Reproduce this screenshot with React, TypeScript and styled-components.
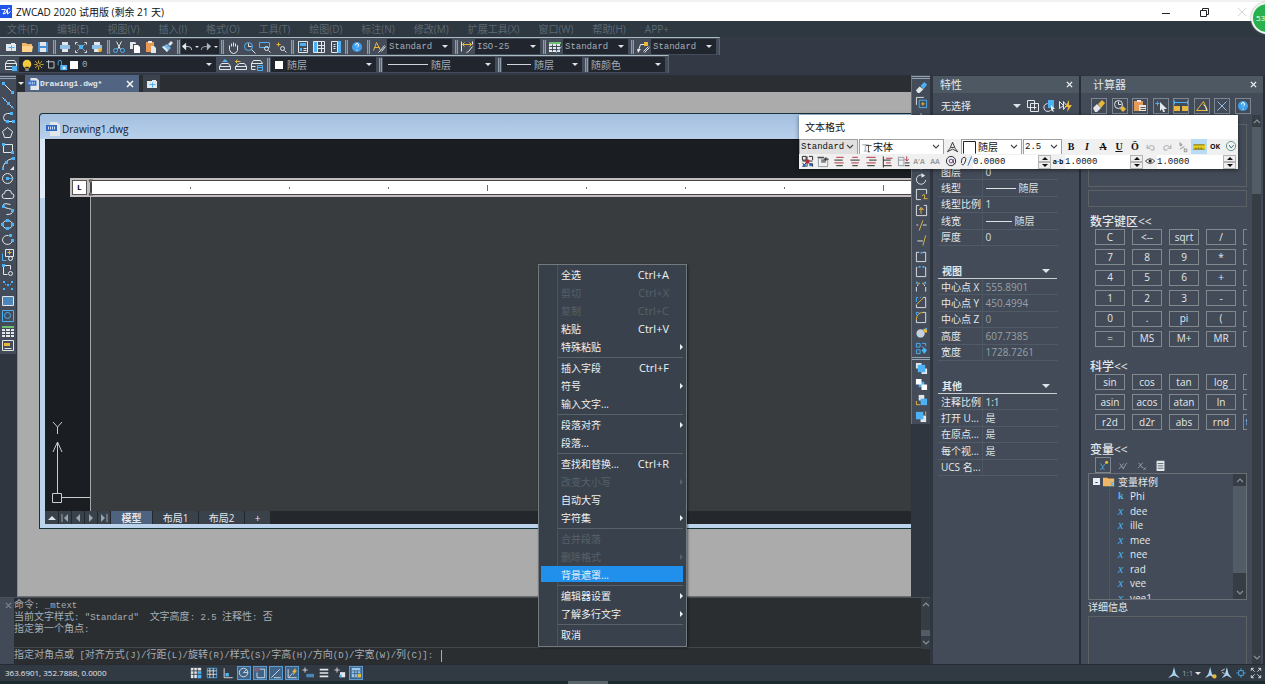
import React from "react";
import styled, { createGlobalStyle, css } from "styled-components";

const ui = `"Open Sans", "Noto Sans CJK SC", sans-serif`;
const mono = `"Liberation Mono", "Noto Sans CJK SC", monospace`;

const Global = createGlobalStyle`
  * { box-sizing: border-box; }
  body { margin: 0; overflow: hidden; background: #2f3640; font: 10px/14px ${ui}; color: #e4e8ec; }
  button, select, input { font: inherit; color: inherit; margin: 0; padding: 0; border: 0; background: none; border-radius: 0; }
  h1, h2, h3, ul, p { margin: 0; padding: 0; font-size: inherit; font-weight: 400; list-style: none; }
  a { color: inherit; text-decoration: none; }
`;

/* ---------- icons ---------- */

type Shape = [kind: "s" | "f", color: string, d: string];

const W = "#e3e7ea";
const B = "#4cb2f5";
const Y = "#eab83c";
const G = "#8d97a1";
const K = "#222222";
const R = "#b02a3a";
const P = "#2d68c4";

const circ = (x: number, y: number, r: number) =>
  `M${x - r} ${y}a${r} ${r} 0 1 0 ${2 * r} 0a${r} ${r} 0 1 0 ${-2 * r} 0z`;
const sq = (x: number, y: number, s = 2) => `M${x} ${y}h${s}v${s}h${-s}z`;
const box = (x: number, y: number, w: number, h: number) => `M${x} ${y}h${w}v${h}h${-w}z`;

const icons: Record<string, Shape[]> = {
  newFile: [["f", W, box(2, 4, 10, 7) + box(7, 3, 4, 2)], ["s", B, "M7 5v5M4 7h6"]],
  folder: [["f", "#f0b866", "M2 3h4l1 1h5v8H2z"], ["f", "#ffd28c", "M2 6h11l-1 6H2z"]],
  save: [["f", "#4d8fd0", "M2 2h9l1 1v9H2z"], ["f", W, box(4, 2, 6, 4) + box(4, 8, 6, 4)]],
  print: [["f", W, box(4, 2, 6, 3) + box(4, 9, 6, 3)], ["f", "#8fc1ea", box(2, 5, 10, 4)]],
  preview: [["f", B, box(5, 5, 4, 4)], ["s", W, "M1 4V2h2M10 2h2v2M12 10v2h-2M3 12H1v-2M3 4l1 1M10 4l-1 1M3 10l1-1M10 10l-1-1"]],
  publish: [["f", W, box(4, 2, 6, 3) + box(4, 9, 5, 3)], ["f", "#8fc1ea", box(2, 5, 10, 4)], ["f", Y, circ(10, 10, 2)]],
  cut: [["s", W, "M4 1l4 8M9 1L5 9"], ["s", B, circ(3, 10, 2) + circ(10, 10, 2)]],
  copy: [["f", W, "M2 2h5l1 1v6H2z"], ["f", "#434c58", box(5, 4, 8, 9)], ["f", "#ffffff", "M6 5h4l2 2v6H6z"]],
  paste: [["f", "#e79a55", box(2, 2, 8, 10)], ["f", W, box(4, 1, 4, 2) + "M7 6h3l2 2v5H7z"]],
  brush: [["f", "#74b8ee", "M7 4l4 4-4 4-5-5z"], ["f", W, "M8 4l3-3 2 2-3 3zM2 7l2-1 4 4-1 2z"]],
  undo: [["s", W, "M4 6h4q4 0 4 4"], ["f", W, "M6 2v9L1 6z"]],
  redo: [["s", "#aeb6be", "M9 6H5q-4 0-4 4"], ["f", "#aeb6be", "M8 2v9l5-5z"]],
  hand: [["s", W, "M3 7V5M5 6V3M7 6V2M9 6V3M11 7V5v5q-1 3-4 3t-4-4V6"]],
  zoomClock: [["s", B, circ(6, 6, 4)], ["s", W, "M6 3v3h3M9 9l4 4"]],
  zoomWin: [["s", B, box(1, 2, 10, 5)], ["s", W, circ(8, 8, 2) + "M10 10l2 2"]],
  zoomPrev: [["s", Y, "M2 4h4M4 2v4"], ["s", W, circ(8, 8, 2) + "M10 10l2 2"]],
  sheet: [["s", W, box(2, 1, 9, 11)], ["f", B, box(4, 3, 6, 3) + box(4, 8, 2, 3)], ["s", W, "M7 8h3M7 10h3"]],
  center: [["s", W, box(1, 1, 11, 11)], ["f", B, box(2, 2, 3, 10)], ["s", W, "M5 1v11M9 1v11M5 5h7M5 8h7"]],
  palette: [["s", W, "M3 1h6v11H3z"], ["f", B, box(10, 1, 3, 12)], ["s", W, "M5 4h2M5 6h2M5 8h2"]],
  help: [["f", "#3fa0ee", circ(7, 7, 5)], ["s", "#ffffff", "M5 5q0-2 1.500-2t1.500 1.500T6.500 7M6.500 9v1"]],
  textStyle: [["s", Y, "M1 10L4 2l4 8M2 7h5"], ["s", W, "M12 5l-4 5-2 2M13 6l-4 5"]],
  dimStyle: [["s", Y, "M2 4h9M4 2L2 4l2 2M9 2l2 2-2 2"], ["s", W, "M1 1v10M12 1v3M12 6l-4 5-2 1"]],
  tableStyle: [["f", "#6fbf73", box(1, 2, 12, 2)], ["f", W, box(1, 4, 11, 8)], ["s", "#434c58", "M1 6h11M1 9h11M4 4v7M8 4v7"], ["s", "#9cc8ea", "M13 6l-5 6"]],
  leader: [["s", W, "M2 10l2-6h4M13 7l-5 5M12 6l-5 5"], ["f", Y, box(8, 2, 4, 4)], ["f", W, "M1 9h4l-3 4z"]],
  layers: [["s", W, "M3 2h7l2 3H1zM1 8h11M1 11h11M1 5v6M12 5v6"], ["f", B, box(8, 8, 5, 5)]],
  layerUp: [["s", W, "M3 5h7l2 3H1zM1 8v3h11V8"], ["f", B, "M7 1l3 3H4z"]],
  layerBack: [["s", W, "M5 5h5l2 3H1zM1 8v3h11V8"], ["s", Y, "M1 3h5M3 1L1 3l2 2"]],
  layerTool: [["s", W, "M3 2h7l2 3H1zM1 8h4M1 11h4M1 5v6"], ["s", B, box(7, 7, 5, 5) + "M7 9h5"]],
  bulb: [["f", "#f3c93f", circ(7, 6, 5) + box(5, 9, 4, 3)], ["f", G, box(5, 12, 4, 2)]],
  sun: [["s", Y, circ(6, 6, 2) + "M6 1v3M6 9v3M1 6h3M9 6h3M2 2l2 2M8 8l2 2M10 2L8 4M4 8l-2 2"]],
  vp: [["s", W, box(4, 3, 7, 8) + "M1 3h3M4 1v2"]],
  lock: [["s", B, "M2 7V3q0-2 2-2t2 2v4"], ["f", B, box(5, 7, 8, 6)], ["f", W, sq(8, 9, 3)]],
  dwg: [["f", W, "M4 0h7l3 3v11H4z"], ["f", P, box(0, 3, 11, 6)], ["s", "#cfe0f5", "M2 4v3M4 4v3M6 4v3M8 4v3"]],
  // drawing tools
  line: [["s", W, "M2 2l9 9"], ["f", B, sq(1, 1, 3) + sq(10, 10, 3)]],
  ray: [["s", W, "M1 1l11 11"], ["f", B, sq(3, 3) + sq(6, 6, 3) + sq(10, 10)]],
  pline: [["s", W, "M9 2H6a4 4 0 0 0 0 8h5"], ["f", B, sq(9, 1, 3) + sq(5, 9, 3) + sq(11, 9, 3)]],
  polygon: [["s", W, "M6 1l5 4-2 6H3L1 5z"]],
  rect: [["s", W, box(2, 3, 9, 8)], ["f", B, sq(1, 2, 3) + sq(10, 10, 3)]],
  arc: [["s", W, "M1 12Q2 3 11 1"], ["f", B, sq(1, 11) + sq(4, 4, 3) + sq(11, 0, 3)], ["f", W, "M13 9v4H9z"]],
  circle: [["s", W, circ(6, 6, 5)], ["s", B, "M6 6h6"], ["f", B, sq(5, 5, 3)]],
  cloud: [["s", W, "M3 11a2.500 2.500 0 0 1 0-5 3.500 3.500 0 0 1 7 0 2.500 2.500 0 0 1 0 5z"]],
  spline: [["s", W, "M9 2Q1 0 2 3t5 3 4 3-6 3"], ["f", B, sq(1, 3, 3) + sq(10, 7, 3)]],
  ellipse: [["s", W, "M1 6a5 4 0 1 0 10 0a5 4 0 1 0-10 0z"], ["f", B, sq(0, 5, 3) + sq(5, 1, 3) + sq(10, 5, 3) + sq(5, 9, 3)]],
  earc: [["s", W, "M7 2a5 4.500 0 1 0 4 5"], ["f", B, sq(8, 1, 3) + sq(10, 6, 3)]],
  insert: [["s", W, box(4, 1, 8, 7) + circ(9, 10, 2)], ["s", B, "M1 5v7h4"], ["s", Y, "M6 4h4M8 2v4"]],
  block: [["s", W, "M9 6V2H2v9h4"], ["s", W, circ(9, 10, 2)], ["f", B, sq(1, 1, 3)]],
  points: [["f", B, sq(2, 3) + sq(10, 3) + sq(6, 6) + sq(2, 10) + sq(10, 10) + sq(9, 6, 1) + sq(4, 6, 1)]],
  hatch: [["f", "#4a86b8", box(2, 2, 10, 10)], ["s", W, box(1, 2, 11, 9)]],
  region: [["s", B, box(1, 1, 11, 11)], ["s", B, circ(6, 6, 3)]],
  table: [["f", "#6fbf73", box(1, 2, 12, 2)], ["f", W, box(1, 5, 3, 2) + box(5, 5, 4, 2) + box(10, 5, 3, 2) + box(1, 8, 3, 2) + box(5, 8, 4, 2) + box(10, 8, 3, 2) + box(1, 11, 3, 2) + box(5, 11, 4, 2) + box(10, 11, 3, 2)]],
  mtext: [["s", W, box(1, 1, 11, 10)], ["f", Y, box(3, 4, 6, 3)], ["s", W, "M3 9h7"]],
  // modify tools
  eraser: [["f", W, "M1 10l4-4 4 3-4 4H3z"], ["f", B, "M6 5l4-4 3 3-4 5z"]],
  copyObj: [["s", B, box(4, 4, 8, 8)], ["s", W, "M1 9V1h8"], ["s", Y, "M8 6v4M6 8h4"]],
  mirror: [["s", W, "M6 1v11M4 4v6H1zM8 4v6h3z"]],
  offset: [["s", W, "M3 12V6q0-3 4-3h5M7 12V8h5"]],
  array: [["f", B, sq(2, 2, 4) + sq(8, 2, 4) + sq(2, 8, 4) + sq(8, 8, 4)]],
  move: [["s", W, "M6 1v11M1 6h11"]],
  rotate: [["s", W, "M8 2A5 5 0 1 0 11 7"], ["f", W, "M7 0l4 3-4 2z"]],
  scale: [["s", W, "M12 6V1H1v11h5"], ["s", Y, "M7 8q3-3 3 0t-1 3h4"]],
  stretch: [["s", W, "M4 1H1v11h11V1H9"], ["s", Y, "M6 10V4M4 6l2-3 3 3M5 5h3"]],
  trim: [["s", Y, "M8 1L4 12"], ["s", W, "M8 6h4M1 6h2"]],
  extend: [["s", Y, "M11 1L8 12"], ["s", W, "M2 7h6"]],
  breakAt: [["s", W, "M4 2H1v10h10V2H8"], ["f", B, sq(6, 2)]],
  breakTwo: [["s", W, "M2 2H1v10h10V2h-1"], ["f", B, sq(4, 1) + sq(8, 1)]],
  join: [["s", W, "M1 12V7M11 12V7M2 6l1-2M10 6L9 4"], ["s", Y, "M3 3h2M7 3h2"], ["f", B, sq(1, 2) + sq(10, 2)]],
  chamfer: [["s", W, "M11 1v11H1V9M8 1h3"], ["s", Y, "M1 9l8-8"], ["s", B, "M1 6V1h2M5 1h1"]],
  fillet: [["s", W, "M11 1v11H1V9M8 1h3"], ["s", Y, "M1 9q0-8 8-8"], ["s", B, "M1 4V1h3"]],
  explode: [["f", "#c4d2e0", circ(6, 8, 4.500)], ["f", Y, sq(9, 3, 4)], ["f", B, sq(11, 2)]],
  blend: [["s", B, box(1, 1, 4, 4) + box(1, 8, 4, 4) + "M7 1h4v3M7 4l4 4"], ["f", B, "M10 6l3 3-3 4-3-4z"]],
  front: [["f", W, box(1, 1, 6, 6) + box(7, 7, 6, 6)], ["f", B, box(3, 3, 8, 8)]],
  back: [["f", B, box(4, 4, 6, 6)], ["f", "#ffffff", box(1, 1, 6, 6) + box(7, 7, 6, 6)]],
  above: [["f", W, box(4, 1, 6, 6)], ["f", B, box(6, 5, 7, 7)], ["s", Y, "M1 7v4h4"]],
  below: [["f", W, box(6, 6, 6, 7)], ["f", B, box(1, 2, 8, 8)], ["s", Y, "M11 5V1"]],
  // property tools
  pick: [["s", W, box(1, 1, 7, 7) + box(4, 4, 8, 8)], ["s", W, "M8 6v4M6 8h4"]],
  pickSel: [["s", W, "M5 4a4 4 0 1 0 3 7"], ["f", B, box(6, 1, 6, 8)], ["f", W, "M9 6l4 4-2 0 1 3-2-1-1-1z"]],
  quick: [["s", W, "M1 2l4 4-4 3zM5 2l3 4-3 4z"], ["f", Y, "M11 1L7 8h3l-1 5 5-7h-3z"]],
  eraserW: [["f", W, "M1 9l4-4 4 4-4 4H3z"], ["f", Y, "M6 5l4-4 3 3-4 5z"]],
  clock: [["s", W, circ(5, 5, 4) + "M5 2v3h3"], ["f", Y, "M7 10l3-3 3 3-3 3z"]],
  clip: [["f", "#e79a55", box(1, 2, 9, 10)], ["f", W, box(4, 1, 4, 2) + box(6, 6, 7, 6)], ["s", "#70553f", "M7 8h5M7 10h5"]],
  cursor: [["s", B, "M1 4h4M3 2v4"], ["f", W, "M6 3l7 7-3 0 1 3-2 0-1-3-2 2z"]],
  dist: [["s", B, "M0 3h13M0 1v4M13 1v4"], ["f", Y, box(0, 7, 6, 5) + box(8, 7, 6, 5)]],
  angle: [["s", Y, "M1 11h11M1 11L8 2M8 2l4 9"], ["s", W, "M8 5q3 2 3 6"]],
  cross: [["s", "#8fbfe8", "M2 2l9 9M11 2l-9 9"]],
  varNew: [["s", B, "M2 4q2 0 3 4t3 4M9 4q-1 0-3 4t-4 4"], ["f", Y, circ(11, 3, 2)]],
  varEdit: [["s", "#a5adb5", "M3 4l5 7M8 4l-6 7M12 3l-5 8"]],
  varDel: [["s", "#a5adb5", "M3 3l5 7M8 3l-6 7M9 9l3 3M12 9l-3 3"]],
  calc: [["f", W, box(2, 1, 10, 13)], ["s", "#434c58", "M3 4h7M3 7h7M3 10h7"]],
  varFolder: [["f", "#f0b866", "M0 2h5l1 1h7v9H0z"], ["s", B, "M8 6l4 6M12 6l-4 6"]],
  // status icons
  snap: [["f", W, box(1, 1, 12, 12)], ["f", B, box(9, 5, 4, 8)], ["s", "#2f3640", "M4 1v12M8 1v12M1 4h12M1 8h12"]],
  grid: [["s", B, box(1, 1, 11, 11)], ["s", W, "M4 1v11M8 1v11M1 4h11M1 8h11"]],
  ortho: [["s", W, "M2 1v11h10"], ["f", B, sq(4, 7, 4)]],
  polar: [["s", W, circ(6, 6, 5) + "M6 6h5M6 6l4-4"]],
  osnap: [["s", W, "M6 2h6v10H3V6"], ["s", "#d85450", box(1, 1, 3, 3)]],
  otrack: [["s", W, "M1 12L11 2M4 12h8"]],
  dyn: [["s", W, "M2 2v10h10M3 11l4-4"], ["f", Y, "M11 1L7 6h2l-1 4 5-6h-2z"]],
  dynIn: [["s", W, "M0 3h6M3 0v6"], ["f", "#4a86b8", "M5 8h9v4H5z"]],
  lwt: [["f", W, box(2, 2, 10, 2) + box(2, 6, 10, 2) + box(2, 10, 10, 2)]],
  cycle: [["s", W, "M0 3h6M3 0v6"], ["f", W, box(7, 6, 6, 6)], ["f", B, sq(6, 9, 3)]],
  qp: [["f", "#9cc8ea", box(2, 1, 10, 11)], ["s", "#2f5f8a", "M2 4h9M2 7h9M5 4v7M8 4v7"], ["f", Y, sq(9, 8, 4)]],
  anno: [["f", "#a9d4f2", "M7 0l2 8 5 5-7-3-7 3 5-5z"]],
  annoY: [["f", "#a9d4f2", "M6 0l2 8 4 5-6-3-6 3 4-5z"], ["f", Y, circ(11, 11, 2.500)]],
  annoR: [["f", "#a9d4f2", "M8 0l2 8 4 5-6-3-6 3 4-5z"], ["s", W, "M1 4l4-2M2 6l3 1"]],
  gear: [["s", B, circ(6.500, 6.500, 3)], ["s", B, "M6.500 1v3M6.500 9v3M1 6.500h3M9 6.500h3M3 3l1 1M9 9l1 1M10 3L9 4M4 9l-1 1"]],
  full: [["s", W, "M1 4V1h3M9 1h3v3M12 9v3H9M4 12H1V9M1 1l4 4M12 1L8 5M12 12L8 8M1 12l4-4"]],
  // text format icons
  tt: [["s", G, "M1 3h8M5 3v8M3 11h4"], ["s", K, "M6 4h7M9 4v8M8 12h3"]],
  annoA: [["s", K, "M6 1l3 7 3 4-6-3-6 3 3-4zM4 7h4"]],
  swatch: [["f", "#ffffff", box(1, 2, 12, 12)], ["s", K, "M0 13V1h12v12"]],
  undoG: [["s", "#9aa0a8", "M2 4v4h4M2 8q4-5 8-2v4H6"]],
  redoG: [["s", "#9aa0a8", "M11 4v4H7M11 8Q7 3 3 6v4h4"]],
  frac: [["s", "#8a8a8a", "M3 1v4h2V3H3M3 9l5-3M8 8v4h3V9H8"]],
  rulerY: [["f", "#e7cf1c", box(0, 4, 14, 6)], ["s", "#6d6420", "M0 4h13M0 9h13M3 9V7M6 9V7M9 9V7"]],
  expand: [["s", "#5f8f8c", circ(6, 6, 5)], ["s", "#1b6b66", "M4 5l2 3 3-3"]],
  cols: [["s", K, "M1 1h4v4H1zM8 1h4v4M1 8l4 4M5 8l-4 4M8 9h4v3M1 6h11M6 1v11"], ["f", R, sq(5, 5, 4)], ["f", P, sq(9, 9, 3) + sq(2, 10, 3)]],
  just: [["s", G, box(1, 3, 10, 9)], ["s", K, "M0 2h7M4 5h5M4 7h5M9 2v4M7 4h5"]],
  al: [["s", R, "M3 2h8M1 8h10"], ["s", K, "M1 5h9M3 11h7"]],
  ac: [["s", R, "M3 2h6M2 8h8"], ["s", K, "M1 5h10M3 11h6"]],
  ar: [["s", R, "M1 2h10M1 8h10"], ["s", K, "M4 5h8M2 11h8"]],
  num: [["s", R, "M5 3h7M5 8h5"], ["s", K, "M2 1v12M2 5h8M2 11h9"]],
  field: [["s", G, box(1, 2, 6, 9) + "M1 5h6"], ["s", R, "M10 1v5M8 4l2 2 2-2"], ["s", K, "M8 8h5M8 11h5"]],
  at: [["s", K, circ(6, 6, 5)], ["s", "#633a7a", circ(6, 6, 2) + "M8.500 4v4l2 1"]],
  obl: [["s", K, "M1 8q0-6 3-6t1 5-4 2"], ["s", P, "M8 11l4-10"]],
  eye: [["s", K, "M0 6q6-6 12 0-6 6-12 0z"], ["f", K, circ(6.500, 6.500, 2)]],
};

const Svg = styled.svg<{ $size: number }>`
  flex: none;
  display: block;
  width: ${(p) => p.$size}px;
  height: ${(p) => p.$size}px;
`;

// Strokes are shifted by half a unit so that whole coordinates fall on pixel centres.
const Icon = ({ name, size = 14 }: { name: string; size?: number }) => (
  <Svg $size={size} viewBox="0 0 14 14" aria-hidden="true">
    {icons[name].map(([kind, color, d], i) =>
      kind === "s" ? (
        <path key={i} d={d} fill="none" stroke={color} strokeWidth="1" transform="translate(0.5 0.5)" />
      ) : (
        <path key={i} d={d} fill={color} />
      )
    )}
  </Svg>
);

const Tri = styled.i<{ $dir?: "up" | "down" | "left" | "right"; $color?: string; $s?: number }>`
  flex: none;
  width: 0;
  height: 0;
  border: ${(p) => p.$s ?? 4}px solid transparent;
  pointer-events: none;
  ${(p) => {
    const c = p.$color ?? "#dfe3e7";
    switch (p.$dir) {
      case "up": return css`border-top: 0; border-bottom-color: ${c};`;
      case "left": return css`border-left: 0; border-right-color: ${c};`;
      case "right": return css`border-right: 0; border-left-color: ${c};`;
      default: return css`border-bottom: 0; border-top-color: ${c};`;
    }
  }}
`;

const Chevron = ({ up = false, color = "#8b939b", size = 8 }: { up?: boolean; color?: string; size?: number }) => (
  <Svg $size={size} viewBox="0 0 8 8" aria-hidden="true">
    <path d={up ? "M1 6l3-3 3 3" : "M1 2l3 3 3-3"} fill="none" stroke={color} strokeWidth="1.1" />
  </Svg>
);

/* ---------- shell ---------- */

const Shell = styled.div`
  position: relative;
  display: flex;
  flex-direction: column;
  height: 100vh;
  overflow: hidden;
`;

const TitleBar = styled.header`
  display: flex;
  align-items: center;
  gap: 4px;
  height: 21px;
  padding-right: 17px;
  border-top: 2px solid #f1f1f1;
  background: #fff;
  color: #111;
`;

const Logo = styled.svg`
  width: 12px;
  height: 13px;
`;

const WindowButtons = styled.div`
  display: flex;
  gap: 26px;
  margin-left: auto;
`;

const WindowButton = styled.button`
  display: grid;
  place-items: center;
  width: 12px;
  height: 12px;
`;

const Bubble = styled.div`
  position: absolute;
  top: 2px;
  right: -18px;
  width: 32px;
  height: 32px;
  padding-left: 3px;
  border: 2px solid #eef5ef;
  border-radius: 50%;
  background: #27b04c;
  color: #fff;
  font: 8px/28px ${ui};
  box-shadow: 0 0 2px #8a9a8d;
`;

const MenuBar = styled.nav`
  display: flex;
  align-items: center;
  gap: 19px;
  height: 16px;
  padding-left: 7px;
  background: #2d3841;
  color: #5d6873;
  white-space: nowrap;
`;

const Toolbars = styled.div`
  height: 38px;
  background: #343a45;
`;

const Toolbar = styled.div`
  display: flex;
  align-items: center;
  width: max-content;
  height: 18px;
  padding: 0 2px 0 3px;
  border-top: 1px solid #a9bcc4;
  border-right: 1px solid #59636e;
  background: #434c58;
`;

const ToolButton = styled.button`
  display: grid;
  place-items: center;
  flex: none;
  width: 16px;
  height: 16px;
`;

const Grip = styled.i`
  flex: none;
  width: 6px;
  height: 14px;
  border: solid #434c58;
  border-width: 0 1px 0 2px;
  background: linear-gradient(90deg, #8f9dab 1px, #5d6874 1px, #5d6874 2px, #8f9dab 2px);
`;

const ComboBox = styled.div<{ $w: number }>`
  display: flex;
  align-items: center;
  flex: none;
  width: ${(p) => p.$w}px;
  height: 15px;
  margin: 0 1px 0 0;
  padding: 0 4px 0 2px;
  background: #20252e;
  color: #a4adb6;
`;

const Select = styled.select<{ $mono?: boolean }>`
  flex: 1;
  min-width: 0;
  height: 14px;
  appearance: none;
  outline: 0;
  font: ${(p) => (p.$mono ? `9px/14px ${mono}` : `10px/14px ${ui}`)};
`;

const HistoryCombo = styled.div`
  display: flex;
  align-items: center;
  width: 38px;
  height: 15px;
  background: #20252e;
`;

const HistoryButton = styled.button<{ $w: number }>`
  display: grid;
  place-items: center;
  width: ${(p) => p.$w}px;
  height: 15px;
`;

const Stroke = styled.i<{ $w: number }>`
  flex: none;
  width: ${(p) => p.$w}px;
  height: 1px;
  margin: 0 3px 0 3px;
  background: #cfd5da;
`;

const Swatch = styled.i`
  flex: none;
  width: 8px;
  height: 8px;
  margin: 0 4px 0 2px;
  background: #fff;
`;

const Combo = ({ label, value, w, isMono, children }: {
  label: string; value: string; w: number; isMono?: boolean; children?: React.ReactNode;
}) => (
  <ComboBox $w={w}>
    {children}
    <Select aria-label={label} $mono={isMono}><option>{value}</option></Select>
    <Tri $s={3} />
  </ComboBox>
);

const Tools = ({ names }: { names: string[] }) => (
  <>{names.map((n) => <ToolButton key={n} aria-label={n}><Icon name={n} /></ToolButton>)}</>
);

/* ---------- document area ---------- */

const Main = styled.main`
  display: flex;
  flex: 1;
  min-height: 0;
`;

const Editor = styled.section`
  display: flex;
  flex-direction: column;
  flex: 1;
  min-width: 0;
`;

const EditorTop = styled.div`
  display: flex;
  flex: 1;
  min-height: 0;
`;

const SideBar = styled.aside<{ $w: number }>`
  flex: none;
  width: ${(p) => p.$w}px;
  background: #2f3640;
`;

const ToolColumn = styled.div<{ $h: number }>`
  display: flex;
  flex-direction: column;
  align-items: center;
  height: ${(p) => p.$h}px;
  margin-right: 3px;
  padding-top: 5px;
  border-left: 1px solid #66717e;
  background: linear-gradient(#434c58 1px, #93a4b4 1px, #93a4b4 2px, #434c58 2px, #434c58 3px, #93a4b4 3px, #93a4b4 4px, #434c58 4px);
`;

const DrawColumn = styled(ToolColumn)`
  margin-right: 1px;
  border-left: 0;
`;

const ColumnButton = styled.button`
  display: grid;
  place-items: center;
  flex: 1;
  min-height: 0;
  width: 14px;
`;

const Documents = styled.div`
  display: flex;
  flex-direction: column;
  flex: 1;
  min-width: 0;
`;

const TabStrip = styled.div`
  display: flex;
  height: 17px;
  background: #2b2e32;
`;

const TabMenu = styled.button`
  display: grid;
  place-items: center;
  width: 8px;
`;

const DocTab = styled.div`
  display: flex;
  align-items: center;
  gap: 1px;
  width: 114px;
  margin-right: 4px;
  padding: 0 3px 0 2px;
  background: #516583;
  font: bold 8px/16px ${mono};
`;

const CloseButton = styled.button`
  display: grid;
  place-items: center;
  flex: none;
  width: 12px;
  height: 12px;
  margin-left: auto;
`;

const NewTab = styled.button`
  display: grid;
  place-items: center;
  width: 17px;
  background: #3c434d;
`;

const Workspace = styled.div`
  display: flex;
  flex-direction: column;
  flex: 1;
  min-height: 0;
  padding: 21px 0 67px 21px;
  border-bottom: 1px solid #6c6f72;
  border-left: 1px solid #8d8d8d;
  background: #ababab;
`;

const DocWindow = styled.div`
  display: flex;
  flex-direction: column;
  flex: 1;
  min-height: 0;
  padding: 0 0 4px 5px;
  border: solid #17333a;
  border-width: 1px 0 1px 1px;
  border-radius: 4px 0 0 0;
  background: linear-gradient(#a3bfdf, #b8d0ea 25px, #dbe8f5 25px, #e2ecf7 84px, #bcd3ec 84px);
`;

const DocTitle = styled.div`
  display: flex;
  align-items: center;
  gap: 2px;
  height: 25px;
  padding: 5px 0 0 1px;
  color: #15202c;
`;

const Canvas = styled.div`
  display: flex;
  flex-direction: column;
  flex: 1;
  min-height: 0;
  padding-top: 38px;
  border-top: 1px solid #101214;
  background: #1a1e22;
`;

const Ruler = styled.div`
  display: flex;
  align-items: center;
  height: 19px;
  margin-left: 25px;
  padding-left: 2px;
  overflow: hidden;
  background: #c2bebe;
`;

const TabStop = styled.button`
  width: 15px;
  height: 15px;
  border: 1px solid #555;
  background: #fff;
  color: #000;
  font: bold 8px/12px ${mono};
`;

const Indent = styled.svg`
  flex: none;
  width: 6px;
  height: 19px;
  margin-left: 1px;
`;

const Scale = styled.div`
  display: flex;
  align-items: center;
  flex: 1;
  height: 15px;
  margin-left: -2px;
  overflow: hidden;
  border: solid #444;
  border-width: 1px 0;
  background: #fff;
`;

const Tick = styled.i<{ $major: boolean }>`
  flex: none;
  width: 99px;
  height: ${(p) => (p.$major ? 6 : 2)}px;
  border-right: 1px solid #6b6b6b;
`;

const Model = styled.div`
  display: flex;
  align-items: flex-end;
  flex: 1;
  min-height: 0;
`;

const Axes = styled.svg`
  flex: none;
  width: 45px;
  height: 92px;
`;

const TextRegion = styled.div`
  align-self: stretch;
  flex: 1;
  border-left: 1px solid #a4a6a8;
  background: #393c3f;
`;

const LayoutTabs = styled.div`
  display: flex;
  gap: 1px;
  height: 13px;
  background: #24282d;
`;

const LayoutTab = styled.button<{ $w: number; $active?: boolean }>`
  display: grid;
  place-items: center;
  width: ${(p) => p.$w}px;
  background: ${(p) => (p.$active ? "#4d6380" : "#39414b")};
  font-weight: ${(p) => (p.$active ? 700 : 400)};
  line-height: 12px;
`;

/* ---------- command line ---------- */

const Command = styled.div`
  display: flex;
  height: 67px;
  margin-right: 3px;
  border-top: 1px solid #4a5058;
  background: #2b2e31;
  color: #a6adb4;
  font: 10px/12px ${mono};
`;

const CommandGrip = styled.div`
  width: 14px;
  padding-top: 1px;
  background: #414a56;
`;

const CommandBody = styled.div`
  display: flex;
  flex-direction: column;
  flex: 1;
`;

const History = styled.div`
  flex: 1;
  padding-top: 2px;
  border-bottom: 1px solid #42474c;
`;

const Latin = styled.span`
  font-size: 9px;
`;

const HistoryLine = styled.p`
  height: 12px;
  white-space: pre;
`;

const Prompt = styled.div`
  display: flex;
  align-items: center;
  gap: 8px;
  height: 16px;
  white-space: pre;
`;

const PromptInput = styled.input`
  flex: 1;
  height: 12px;
  border-left: 1px solid #a6adb4;
  outline: 0;
`;

const Scroll = styled.div<{ $w: number }>`
  display: flex;
  flex-direction: column;
  justify-content: space-between;
  align-items: center;
  flex: none;
  width: ${(p) => p.$w}px;
  padding: 2px 0;
  background: #373d45;
`;

const Thumb = styled.i<{ $h: number; $push?: boolean }>`
  width: 100%;
  height: ${(p) => p.$h}px;
  margin: ${(p) => (p.$push ? "auto 0 3px" : "2px 0 auto")};
  background: #525c67;
`;

const CommandScroll = styled(Scroll)`
  height: 51px;
`;

const Mixed = ({ text }: { text: string }) => (
  <>
    {text.split(/([\x20-\x7e]+)/).map((part, i) => (i % 2 ? <Latin key={i}>{part}</Latin> : part))}
  </>
);

/* ---------- panels ---------- */

const Panel = styled.aside<{ $w: number }>`
  display: flex;
  flex-direction: column;
  flex: none;
  width: ${(p) => p.$w}px;
  margin-top: 1px;
  border-right: 2px solid #292e35;
  background: #424b57;
  overflow: hidden;
`;

const PanelHeader = styled.header<{ $inset?: number }>`
  display: flex;
  align-items: center;
  flex: none;
  height: 17px;
  padding: 0 4px 0 ${(p) => p.$inset ?? 7}px;
  background: #4d5863;
  font-size: 11px;
`;

const Selection = styled.div`
  display: flex;
  align-items: center;
  margin-bottom: 48px;
  padding: 3px 6px 0 8px;
  height: 23px;
`;

const SelectionTools = styled.div`
  display: flex;
  margin-left: 4px;
`;

const Props = styled.table`
  width: 120px;
  height: 82px;
  margin-left: 5px;
  border-collapse: collapse;
  table-layout: fixed;

  tr { border-bottom: 1px solid #515b67; }
  th, td { padding: 0; font-weight: 400; text-align: left; line-height: 14px; white-space: nowrap; }
  th { width: 44px; padding-left: 3px; border-right: 1px solid #4d5763; }
  td { padding-left: 3px; }
`;

const PropValue = styled.td<{ $dim?: boolean }>`
  color: ${(p) => (p.$dim ? "#98a1aa" : "#dde1e5")};
`;

const ValueLine = styled.i<{ $w: number }>`
  display: inline-block;
  width: ${(p) => p.$w}px;
  height: 1px;
  margin-right: 3px;
  vertical-align: 3px;
  background: #dde1e5;
`;

const PropGroup = styled.h3`
  display: flex;
  align-items: center;
  justify-content: space-between;
  width: 119px;
  height: 17px;
  margin: 16px 0 0 5px;
  padding: 2px 7px 0 4px;
  border-bottom: 1px solid #c9ced3;
  font-weight: 700;
`;

const CalcTools = styled.div`
  display: flex;
  justify-content: space-between;
  flex: none;
  margin: 5px 12px 0 10px;
`;

const FramedTool = styled.button`
  display: grid;
  place-items: center;
  width: 16px;
  height: 16px;
  border: 1px solid #7d868f;
`;

const CalcRow = styled.div`
  display: flex;
  justify-content: space-between;
  flex: 1;
  min-height: 0;
  margin-top: 1px;
  padding: 0 2px 0 7px;
`;

const CalcBody = styled.div`
  width: 159px;
  overflow: hidden;
`;

const Display = styled.textarea<{ $h: number; $top: number }>`
  display: block;
  width: 100%;
  height: ${(p) => p.$h}px;
  margin: ${(p) => p.$top}px 0 0;
  padding: 0;
  resize: none;
  outline: 0;
  border: 1px solid #5d6164;
  background: none;
  color: inherit;
`;

const CalcHeading = styled.h3<{ $top: number }>`
  height: 15px;
  margin-top: ${(p) => p.$top}px;
  padding-left: 2px;
  font: 500 12px/15px ${ui};
  white-space: nowrap;
`;

const Keys = styled.div<{ $h: number }>`
  display: grid;
  grid-template-columns: repeat(5, 30px);
  column-gap: 7px;
  align-content: space-between;
  height: ${(p) => p.$h}px;
  padding-left: 7px;
`;

const Key = styled.button`
  width: 30px;
  height: 16px;
  border: 1px solid #81898f;
  font: 10px/13px ${ui};
`;

const VarTools = styled.div`
  display: flex;
  gap: 3px;
  margin-left: 7px;
`;

const VarTool = styled.button<{ $on?: boolean }>`
  display: grid;
  place-items: center;
  width: 16px;
  height: 16px;
  border: 1px solid ${(p) => (p.$on ? "#7d868f" : "transparent")};
`;

const Tree = styled.div`
  display: flex;
  justify-content: space-between;
  height: 127px;
  overflow: hidden;
  border: 1px solid #6a7076;
`;

const TreeRoot = styled.div`
  display: flex;
  align-items: center;
  gap: 3px;
  height: 15px;
  padding-left: 4px;
`;

const Toggle = styled.button`
  display: grid;
  place-items: center;
  width: 7px;
  height: 7px;
  background: #e9eef3;
  color: #1f3d70;
  font: bold 8px/7px ${mono};
`;

const TreeList = styled.ul`
  display: grid;
  grid-template-rows: repeat(8, 1fr);
  height: 116px;
  margin-left: 20px;
  border-left: 1px dotted #5a646f;
`;

const TreeItem = styled.li`
  display: flex;
  align-items: center;
  padding-left: 8px;
`;

const Symbol = styled.i`
  width: 12px;
  color: #4cb2f5;
  font: italic 12px/14px "Liberation Serif", serif;
`;

const SymbolK = styled(Symbol)`
  font: bold 10px/14px "Liberation Serif", serif;
`;

/* ---------- status bar ---------- */

const Status = styled.footer`
  display: flex;
  align-items: center;
  flex: none;
  height: 17px;
  padding-left: 5px;
  border-top: 1px solid #272b31;
  background: #313943;
`;

const Coordinates = styled.output`
  width: 184px;
  font: 8px/14px ${ui};
`;

const StatusButton = styled.button<{ $on?: boolean }>`
  display: grid;
  place-items: center;
  width: 14px;
  height: 14px;
  margin-right: 2px;
  border: 1px solid ${(p) => (p.$on ? "#5b9bd0" : "transparent")};
  background: ${(p) => (p.$on ? "#3f6387" : "none")};
`;

const AnnoButton = styled(StatusButton)`
  margin-right: 1px;
`;

const StatusRight = styled.div`
  display: flex;
  align-items: center;
  margin: 0 1px 0 auto;
  color: #9aa3ac;
  font: 8px/14px ${ui};
`;

const ScaleButton = styled.button`
  display: flex;
  align-items: center;
  gap: 2px;
  width: 22px;
`;

const TaskEdge = styled.div`
  display: flex;
  flex: none;
  height: 3px;
  padding-left: 568px;
  background: #1b2b30;
`;

const TaskItem = styled.i`
  width: 40px;
  background: #59636a;
`;

/* ---------- text format window ---------- */

const FormatWindow = styled.section`
  position: absolute;
  top: 115px;
  right: 27px;
  width: 439px;
  background: #f0f0f0;
  color: #111;
  box-shadow: 0 1px 4px rgba(0, 0, 0, 0.5);
`;

const FormatTitle = styled.h2`
  height: 24px;
  padding-left: 6px;
  background: #fff;
  line-height: 24px;
`;

const FormatRow = styled.div`
  display: flex;
  align-items: center;
  height: 15px;
`;

const LightCombo = styled.div<{ $w: number; $gray?: boolean }>`
  display: flex;
  align-items: center;
  flex: none;
  gap: 1px;
  width: ${(p) => p.$w}px;
  height: 15px;
  margin-right: 1px;
  padding: 0 3px 0 1px;
  border: solid #a0a0a0;
  border-width: 1px 1px 0 1px;
  background: ${(p) => (p.$gray ? "#e1e1e1" : "#fff")};
`;

const FormatButton = styled.button<{ $w?: number; $on?: boolean; $dim?: boolean }>`
  display: grid;
  place-items: center;
  flex: none;
  width: ${(p) => p.$w ?? 16}px;
  height: 15px;
  background: ${(p) => (p.$on ? "#b9dcf6" : "none")};
  color: ${(p) => (p.$dim ? "#9a9a9a" : "#111")};
  font: bold 10px/14px "Liberation Serif", serif;
`;

const SmallLabel = styled.span`
  font: bold 7px/12px ${ui};
`;

const Spin = styled.div<{ $w: number }>`
  display: flex;
  flex: none;
  width: ${(p) => p.$w}px;
  height: 14px;
  background: #fff;
`;

const SpinInput = styled.input`
  flex: 1;
  min-width: 0;
  outline: 0;
  font: 9px/12px ${mono};
`;

const SpinButtons = styled.div`
  display: flex;
  flex-direction: column;
  width: 13px;
`;

const SpinButton = styled.button`
  display: grid;
  place-items: center;
  height: 7px;
  border: 1px solid #b5b5b5;
  background: #eee;
`;

const SpinBox = ({ label, value, w }: { label: string; value: string; w: number }) => (
  <Spin $w={w}>
    <SpinInput aria-label={label} defaultValue={value} />
    <SpinButtons>
      <SpinButton aria-label="+"><Tri $dir="up" $s={3} $color="#111" /></SpinButton>
      <SpinButton aria-label="-"><Tri $s={3} $color="#111" /></SpinButton>
    </SpinButtons>
  </Spin>
);

/* ---------- context menu ---------- */

const ContextMenu = styled.div`
  position: absolute;
  top: 264px;
  left: 538px;
  width: 149px;
  padding: 1px 3px 2px 2px;
  border: 1px solid #74797d;
  background: linear-gradient(90deg, #373f48 18px, #4a525b 18px, #4a525b 19px, #39424c 19px);
  box-shadow: 1px 1px 2px rgba(0, 0, 0, 0.5);
`;

const MenuItem = styled.button<{ $active?: boolean }>`
  display: flex;
  align-items: center;
  justify-content: space-between;
  width: 100%;
  height: 18px;
  padding: 0 0 1px 20px;
  background: ${(p) => (p.$active ? "linear-gradient(#2090ec, #2090ec) 0 0 / 100% 16px no-repeat" : "none")};
  color: #eef1f3;
  font: 10px/16px ${ui};

  &:disabled { color: #56606a; }
`;

const Shortcut = styled.span`
  margin: 0 14px 0 auto;
  font-size: 11px;
`;

const Divider = styled.hr`
  height: 1px;
  margin: 1px 0 1px 17px;
  border: 0;
  background: #5a6269;
`;

type Entry = { label: string; key?: string; sub?: boolean; off?: boolean; active?: boolean };

const menuGroups: Entry[][] = [
  [
    { label: "全选", key: "Ctrl+A" },
    { label: "剪切", key: "Ctrl+X", off: true },
    { label: "复制", key: "Ctrl+C", off: true },
    { label: "粘贴", key: "Ctrl+V" },
    { label: "特殊粘贴", sub: true },
  ],
  [{ label: "插入字段", key: "Ctrl+F" }, { label: "符号", sub: true }, { label: "输入文字..." }],
  [{ label: "段落对齐", sub: true }, { label: "段落..." }],
  [
    { label: "查找和替换...", key: "Ctrl+R" },
    { label: "改变大小写", sub: true, off: true },
    { label: "自动大写" },
    { label: "字符集", sub: true },
  ],
  [{ label: "合并段落", off: true }, { label: "删除格式", sub: true, off: true }, { label: "背景遮罩...", active: true }],
  [{ label: "编辑器设置", sub: true }, { label: "了解多行文字", sub: true }],
  [{ label: "取消" }],
];

/* ---------- data ---------- */

const menus = ["文件(F)", "编辑(E)", "视图(V)", "插入(I)", "格式(O)", "工具(T)", "绘图(D)", "标注(N)", "修改(M)", "扩展工具(X)", "窗口(W)", "帮助(H)", "APP+"];
const drawTools = ["line", "ray", "pline", "polygon", "rect", "arc", "circle", "cloud", "spline", "ellipse", "earc", "insert", "block", "points", "hatch", "region", "table", "mtext"];
const modifyTools = ["eraser", "copyObj", "mirror", "offset", "array", "move", "rotate", "scale", "stretch", "trim", "extend", "breakAt", "breakTwo", "join", "chamfer", "fillet", "explode", "blend"];
const orderTools = ["front", "back", "above", "below"];
const numberKeys = ["C", "<--", "sqrt", "/", "", "7", "8", "9", "*", "", "4", "5", "6", "+", "", "1", "2", "3", "-", "", "0", ".", "pi", "(", "", "=", "MS", "M+", "MR", ""];
const scienceKeys = ["sin", "cos", "tan", "log", "", "asin", "acos", "atan", "ln", "", "r2d", "d2r", "abs", "rnd", "trunc"];
const variables = ["dee", "ille", "mee", "nee", "rad", "vee", "vee1"];
const statusTools: [string, boolean][] = [
  ["snap", false], ["grid", false], ["ortho", false], ["polar", true], ["osnap", true], ["otrack", true],
  ["dyn", true], ["dynIn", false], ["lwt", false], ["cycle", false], ["qp", true],
];

const Cross = ({ color = "#f2f4f6", size = 8 }: { color?: string; size?: number }) => (
  <Svg $size={size} viewBox="0 0 8 8" aria-hidden="true">
    <path d="M1 1l6 6M7 1L1 7" stroke={color} strokeWidth="1.5" />
  </Svg>
);

const Row = ({ name, value, dim, line }: { name: string; value: string; dim?: boolean; line?: number }) => (
  <tr>
    <th scope="row">{name}</th>
    <PropValue $dim={dim}>{line ? <ValueLine $w={line} /> : null}{value}</PropValue>
  </tr>
);

export default function App() {
  return (
    <Shell>
      <Global />
      <TitleBar>
        <Logo viewBox="0 0 12 13" aria-hidden="true">
          <path d="M0 0h12v13H0z" fill="#1f55e8" />
          <path d="M1.500 4.500h4L3 9l3-1 1.500-4v5l3-2.500M8 3l2 1" fill="none" stroke="#fff" strokeWidth="1" />
        </Logo>
        <h1>ZWCAD 2020 试用版 (剩余 21 天)</h1>
        <WindowButtons>
          <WindowButton aria-label="最小化">
            <svg width="10" height="10"><path d="M1 6.500h8" stroke="#222" /></svg>
          </WindowButton>
          <WindowButton aria-label="还原">
            <svg width="10" height="10"><path d="M1.500 3.500h6v6h-6zM3.500 3V1.500h6v6H8" fill="none" stroke="#222" /></svg>
          </WindowButton>
          <WindowButton aria-label="关闭">
            <svg width="10" height="10"><path d="M1 1l8 8M9 1L1 9" stroke="#d4d4d4" /></svg>
          </WindowButton>
        </WindowButtons>
      </TitleBar>

      <MenuBar>{menus.map((m) => <a key={m} href="#">{m}</a>)}</MenuBar>

      <Toolbars>
        <Toolbar>
          <Tools names={["newFile", "folder", "save"]} />
          <Grip />
          <Tools names={["print", "preview", "publish"]} />
          <Grip />
          <Tools names={["cut", "copy", "paste", "brush"]} />
          <Grip />
          <HistoryCombo>
            <HistoryButton $w={12} aria-label="撤销"><Icon name="undo" size={12} /></HistoryButton>
            <HistoryButton $w={7}><Tri $s={2} /></HistoryButton>
            <HistoryButton $w={12} aria-label="重做"><Icon name="redo" size={12} /></HistoryButton>
            <HistoryButton $w={7}><Tri $s={2} /></HistoryButton>
          </HistoryCombo>
          <Grip />
          <Tools names={["hand", "zoomClock", "zoomWin", "zoomPrev"]} />
          <Grip />
          <Tools names={["sheet", "center", "palette"]} />
          <Grip />
          <Tools names={["help"]} />
          <Grip />
          <Tools names={["textStyle"]} />
          <Combo label="文字样式" value="Standard" w={65} isMono />
          <Grip />
          <Tools names={["dimStyle"]} />
          <Combo label="标注样式" value="ISO-25" w={65} isMono />
          <Grip />
          <Tools names={["tableStyle"]} />
          <Combo label="表格样式" value="Standard" w={65} isMono />
          <Grip />
          <Tools names={["leader"]} />
          <Combo label="引线样式" value="Standard" w={65} isMono />
        </Toolbar>
        <Toolbar>
          <Tools names={["layers"]} />
          <Combo label="图层" value="0" w={197} isMono>
            <Icon name="bulb" size={12} />
            <Icon name="sun" size={12} />
            <Icon name="vp" size={11} />
            <Icon name="lock" size={12} />
            <Swatch />
          </Combo>
          <Tools names={["layerUp", "layerBack", "layerTool"]} />
          <Grip />
          <Combo label="颜色" value="随层" w={105}><Swatch /></Combo>
          <Grip />
          <Combo label="线型" value="随层" w={112}><Stroke $w={40} /></Combo>
          <Grip />
          <Combo label="线宽" value="随层" w={80}><Stroke $w={24} /></Combo>
          <Grip />
          <Combo label="打印样式" value="随颜色" w={76} />
        </Toolbar>
      </Toolbars>

      <Main>
        <Editor>
          <EditorTop>
            <SideBar $w={17}>
              <DrawColumn $h={279}>
                {drawTools.map((n) => <ColumnButton key={n} aria-label={n}><Icon name={n} /></ColumnButton>)}
              </DrawColumn>
            </SideBar>

            <Documents>
              <TabStrip>
                <TabMenu aria-label="文档"><Tri $s={3} /></TabMenu>
                <DocTab>
                  <Icon name="dwg" size={12} />
                  <span>Drawing1.dwg*</span>
                  <CloseButton aria-label="关闭文档"><Cross /></CloseButton>
                </DocTab>
                <NewTab aria-label="新建"><Icon name="newFile" /></NewTab>
              </TabStrip>
              <Workspace>
                <DocWindow>
                  <DocTitle><Icon name="dwg" />Drawing1.dwg</DocTitle>
                  <Canvas>
                    <Ruler>
                      <TabStop>L</TabStop>
                      <Indent viewBox="0 0 6 19" aria-hidden="true">
                        <path d="M1 2h4L3.500 5v9L5 17H1l1.500-3V5z" fill="#8d8a8a" stroke="#444" strokeWidth="1" />
                      </Indent>
                      <Scale>
                        {Array.from({ length: 20 }, (_, i) => <Tick key={i} $major={i % 4 === 3} />)}
                      </Scale>
                    </Ruler>
                    <Model>
                      <Axes viewBox="0 0 45 92" aria-hidden="true">
                        <path d="M8 3l4.500 5L17 3M12.500 8v7M12.500 23v51M8 33l4.500-10L17 33M7.500 74.500h9v9h-9zM17 78.500h28" fill="none" stroke="#c9cccf" />
                      </Axes>
                      <TextRegion />
                    </Model>
                  </Canvas>
                  <LayoutTabs>
                    <LayoutTab $w={13} aria-label="布局列表"><Tri $dir="up" /></LayoutTab>
                    <LayoutTab $w={12} aria-label="第一个"><svg width="8" height="8"><path d="M1 0v8" stroke="#98a3b0" /><path d="M7 0v8L3 4z" fill="#98a3b0" /></svg></LayoutTab>
                    <LayoutTab $w={12} aria-label="上一个"><Tri $dir="left" $color="#98a3b0" /></LayoutTab>
                    <LayoutTab $w={12} aria-label="下一个"><Tri $dir="right" $color="#98a3b0" /></LayoutTab>
                    <LayoutTab $w={12} aria-label="最后一个"><svg width="8" height="8"><path d="M7 0v8" stroke="#98a3b0" /><path d="M1 0v8l4-4z" fill="#98a3b0" /></svg></LayoutTab>
                    <LayoutTab $w={41} $active>模型</LayoutTab>
                    <LayoutTab $w={45}>布局1</LayoutTab>
                    <LayoutTab $w={45}>布局2</LayoutTab>
                    <LayoutTab $w={25}>+</LayoutTab>
                  </LayoutTabs>
                </DocWindow>
              </Workspace>
            </Documents>

            <SideBar $w={22}>
              <ToolColumn $h={281}>
                {modifyTools.map((n) => <ColumnButton key={n} aria-label={n}><Icon name={n} size={13} /></ColumnButton>)}
              </ToolColumn>
              <ToolColumn $h={68}>
                {orderTools.map((n) => <ColumnButton key={n} aria-label={n}><Icon name={n} size={13} /></ColumnButton>)}
              </ToolColumn>
            </SideBar>
          </EditorTop>

          <Command>
            <CommandGrip>
              <CloseButton aria-label="关闭命令行"><Cross color="#7a838c" size={7} /></CloseButton>
            </CommandGrip>
            <CommandBody>
              <History>
                <HistoryLine><Mixed text="命令: _mtext" /></HistoryLine>
                <HistoryLine><Mixed text={'当前文字样式: "Standard"  文字高度: 2.5 注释性: 否'} /></HistoryLine>
                <HistoryLine><Mixed text="指定第一个角点:" /></HistoryLine>
              </History>
              <Prompt>
                <label htmlFor="command">
                  <Mixed text="指定对角点或 [对齐方式(J)/行距(L)/旋转(R)/样式(S)/字高(H)/方向(D)/字宽(W)/列(C)]:" />
                </label>
                <PromptInput id="command" />
              </Prompt>
            </CommandBody>
            <CommandScroll $w={9}><Chevron up /><Thumb $h={6} $push /><Chevron /></CommandScroll>
          </Command>
        </Editor>

        <Panel $w={148}>
          <PanelHeader>
            <h2>特性</h2>
            <CloseButton aria-label="关闭特性"><Cross size={7} /></CloseButton>
          </PanelHeader>
          <Selection>
            <Select aria-label="选择对象"><option>无选择</option></Select>
            <Tri />
            <SelectionTools><Tools names={["pick", "pickSel", "quick"]} /></SelectionTools>
          </Selection>
          <Props>
            <tbody>
              <Row name="图层" value="0" />
              <Row name="线型" value="随层" line={30} />
              <Row name="线型比例" value="1" />
              <Row name="线宽" value="随层" line={26} />
              <Row name="厚度" value="0" />
            </tbody>
          </Props>
          <PropGroup>视图<Tri /></PropGroup>
          <Props>
            <tbody>
              <Row name="中心点 X" value="555.8901" dim />
              <Row name="中心点 Y" value="450.4994" dim />
              <Row name="中心点 Z" value="0" dim />
              <Row name="高度" value="607.7385" dim />
              <Row name="宽度" value="1728.7261" dim />
            </tbody>
          </Props>
          <PropGroup>其他<Tri /></PropGroup>
          <Props>
            <tbody>
              <Row name="注释比例" value="1:1" />
              <Row name="打开 U..." value="是" />
              <Row name="在原点..." value="是" />
              <Row name="每个视..." value="是" />
              <Row name="UCS 名..." value="" />
            </tbody>
          </Props>
        </Panel>

        <Panel $w={184}>
          <PanelHeader $inset={12}>
            <h2>计算器</h2>
            <CloseButton aria-label="关闭计算器"><Cross size={7} /></CloseButton>
          </PanelHeader>
          <CalcTools>
            {["eraserW", "clock", "clip", "cursor", "dist", "angle", "cross", "help"].map((n) => (
              <FramedTool key={n} aria-label={n}><Icon name={n} /></FramedTool>
            ))}
          </CalcTools>
          <CalcRow>
            <CalcBody>
              <Display $h={63} $top={9} aria-label="历史记录" />
              <Display $h={17} $top={3} aria-label="表达式" />
              <CalcHeading $top={7}>数字键区&lt;&lt;</CalcHeading>
              <Keys $h={118}>{numberKeys.map((k, i) => <Key key={i}>{k}</Key>)}</Keys>
              <CalcHeading $top={12}>科学&lt;&lt;</CalcHeading>
              <Keys $h={56}>{scienceKeys.map((k, i) => <Key key={i}>{k}</Key>)}</Keys>
              <CalcHeading $top={12}>变量&lt;&lt;</CalcHeading>
              <VarTools>
                {["varNew", "varEdit", "varDel", "calc"].map((n, i) => (
                  <VarTool key={n} $on={i === 0} aria-label={n}><Icon name={n} size={11} /></VarTool>
                ))}
              </VarTools>
              <Tree>
                <div>
                  <TreeRoot>
                    <Toggle>-</Toggle>
                    <Icon name="varFolder" size={12} />
                    变量样例
                  </TreeRoot>
                  <TreeList>
                    <TreeItem><SymbolK>k</SymbolK>Phi</TreeItem>
                    {variables.map((v) => <TreeItem key={v}><Symbol>x</Symbol>{v}</TreeItem>)}
                  </TreeList>
                </div>
                <Scroll $w={13}><Chevron up /><Thumb $h={87} /><Chevron /></Scroll>
              </Tree>
              <p>详细信息</p>
              <Display $h={60} $top={2} aria-label="详细信息" />
            </CalcBody>
            <Scroll $w={9}><Chevron up /><Thumb $h={67} /><Chevron /></Scroll>
          </CalcRow>
        </Panel>
      </Main>

      <Status>
        <Coordinates>363.6901, 352.7888, 0.0000</Coordinates>
        {statusTools.map(([n, on]) => (
          <StatusButton key={n} $on={on} aria-label={n}><Icon name={n} size={12} /></StatusButton>
        ))}
        <StatusRight>
          <AnnoButton aria-label="注释"><Icon name="anno" size={12} /></AnnoButton>
          <ScaleButton>1:1<Tri $s={3} /></ScaleButton>
          {["annoY", "annoR", "gear", "full"].map((n) => (
            <AnnoButton key={n} aria-label={n}><Icon name={n} size={12} /></AnnoButton>
          ))}
        </StatusRight>
      </Status>
      <TaskEdge><TaskItem /></TaskEdge>

      <FormatWindow>
        <FormatTitle>文本格式</FormatTitle>
        <FormatRow>
          <LightCombo $w={59} $gray>
            <Select aria-label="样式" $mono><option>Standard</option></Select><Chevron color="#444" />
          </LightCombo>
          <LightCombo $w={85}>
            <Icon name="tt" size={11} />
            <Select aria-label="字体"><option>宋体</option></Select><Chevron color="#444" />
          </LightCombo>
          <FormatButton aria-label="注释性"><Icon name="annoA" size={12} /></FormatButton>
          <LightCombo $w={61}>
            <Icon name="swatch" />
            <Select aria-label="文字颜色"><option>随层</option></Select><Chevron color="#444" />
          </LightCombo>
          <LightCombo $w={39}>
            <Select aria-label="文字高度" $mono><option>2.5</option></Select><Chevron color="#444" />
          </LightCombo>
          <FormatButton>B</FormatButton>
          <FormatButton><i>I</i></FormatButton>
          <FormatButton><s>A</s></FormatButton>
          <FormatButton><u>U</u></FormatButton>
          <FormatButton>Ō</FormatButton>
          <FormatButton aria-label="放弃"><Icon name="undoG" size={12} /></FormatButton>
          <FormatButton aria-label="重做"><Icon name="redoG" size={12} /></FormatButton>
          <FormatButton aria-label="堆叠"><Icon name="frac" size={12} /></FormatButton>
          <FormatButton $on aria-label="标尺"><Icon name="rulerY" size={12} /></FormatButton>
          <FormatButton><SmallLabel>OK</SmallLabel></FormatButton>
          <FormatButton aria-label="选项"><Icon name="expand" size={13} /></FormatButton>
        </FormatRow>
        <FormatRow>
          {["cols", "just", "al", "ac", "ar", "num", "field"].map((n) => (
            <FormatButton key={n} aria-label={n}><Icon name={n} size={13} /></FormatButton>
          ))}
          <FormatButton $dim><SmallLabel>A'A</SmallLabel></FormatButton>
          <FormatButton $dim><SmallLabel>AA</SmallLabel></FormatButton>
          <FormatButton aria-label="符号"><Icon name="at" size={13} /></FormatButton>
          <FormatButton $w={14} aria-label="倾斜"><Icon name="obl" size={13} /></FormatButton>
          <SpinBox label="倾斜角度" value="0.0000" w={78} />
          <FormatButton $w={14}><SmallLabel>a·b</SmallLabel></FormatButton>
          <SpinBox label="追踪" value="1.0000" w={78} />
          <FormatButton $w={14} aria-label="宽度"><Icon name="eye" size={11} /></FormatButton>
          <SpinBox label="宽度因子" value="1.0000" w={79} />
        </FormatRow>
      </FormatWindow>

      <ContextMenu role="menu">
        {menuGroups.map((group, g) => (
          <React.Fragment key={g}>
            {g > 0 && <Divider />}
            {group.map((e) => (
              <MenuItem key={e.label} role="menuitem" disabled={e.off} $active={e.active}>
                {e.label}
                {e.key && <Shortcut>{e.key}</Shortcut>}
                {e.sub && <Tri $dir="right" $s={3} $color={e.off ? "#56606a" : "#eef1f3"} />}
              </MenuItem>
            ))}
          </React.Fragment>
        ))}
      </ContextMenu>

      <Bubble>53</Bubble>
    </Shell>
  );
}
